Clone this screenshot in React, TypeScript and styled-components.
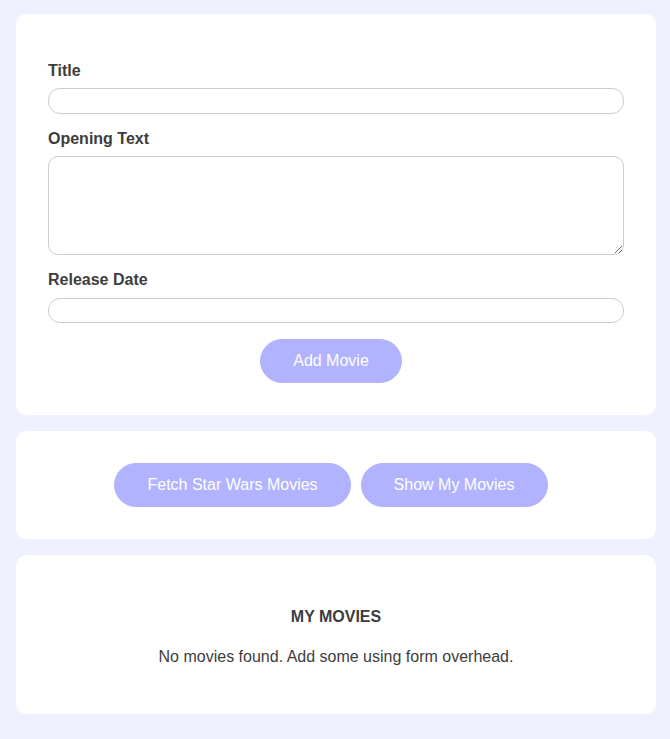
import React from "react";
import styled, { createGlobalStyle } from "styled-components";

const GlobalStyle = createGlobalStyle`
  html, body {
    margin: 0;
    padding: 0;
    background: #eef0ff;
    font-family: "Liberation Sans", Arial, sans-serif;
    color: #3d3d3d;
  }
  * { box-sizing: border-box; }
`;

const Page = styled.main`
  display: flex;
  flex-direction: column;
  gap: 16px;
  width: 640px;
  margin: 0 0 0 16px;
  padding: 14px 0 25px;
`;

const Card = styled.section`
  background: #ffffff;
  border-radius: 10px;
  padding: 32px;
  text-align: ${(p: { $center?: boolean }) => (p.$center ? "center" : "left")};
`;

const Control = styled.div`
  margin: 16px 0;
`;

const Label = styled.label`
  display: block;
  font-size: 16px;
  font-weight: bold;
  line-height: 18.4px;
  margin-bottom: 8px;
  color: #3d3d3d;
`;

const Input = styled.input`
  display: block;
  width: 100%;
  height: 25.5px;
  border: 1px solid #ccc;
  border-radius: 12px;
  padding: 4px;
  font: inherit;
  font-size: 13px;
  outline: none;
`;

const TextArea = styled.textarea`
  display: block;
  width: 100%;
  height: 99px;
  border: 1px solid #ccc;
  border-radius: 10px;
  padding: 4px;
  font: inherit;
  font-size: 13px;
  outline: none;
`;

const Actions = styled.div`
  display: flex;
  justify-content: center;
`;

const Button = styled.button`
  font-family: "Liberation Sans", Arial, sans-serif;
  font-size: 16px;
  line-height: 18px;
  height: 44px;
  color: #ffffff;
  background: #b1b3ff;
  border: 1px solid #b1b3ff;
  border-radius: 22px;
  padding: 12px 32px;
  margin-right: 10px;
  cursor: pointer;
`;

const Heading = styled.h2`
  font-size: 16px;
  font-weight: bold;
  line-height: 18.4px;
  margin: 20.5px 0 22px;
  color: #3d3d3d;
`;

const Message = styled.p`
  font-size: 16px;
  line-height: 18.4px;
  margin: 0 0 15.7px;
  color: #3d3d3d;
`;

export default function App() {
  return (
    <>
      <GlobalStyle />
      <Page>
        <Card>
          <form onSubmit={(e) => e.preventDefault()}>
            <Control>
              <Label htmlFor="title">Title</Label>
              <Input id="title" type="text" />
            </Control>
            <Control>
              <Label htmlFor="opening-text">Opening Text</Label>
              <TextArea id="opening-text" rows={5} />
            </Control>
            <Control>
              <Label htmlFor="date">Release Date</Label>
              <Input id="date" type="text" />
            </Control>
            <Actions>
              <Button type="submit">Add Movie</Button>
            </Actions>
          </form>
        </Card>
        <Card>
          <Actions>
            <Button type="button">Fetch Star Wars Movies</Button>
            <Button type="button">Show My Movies</Button>
          </Actions>
        </Card>
        <Card $center>
          <Heading>MY MOVIES</Heading>
          <Message>No movies found. Add some using form overhead.</Message>
        </Card>
      </Page>
    </>
  );
}
